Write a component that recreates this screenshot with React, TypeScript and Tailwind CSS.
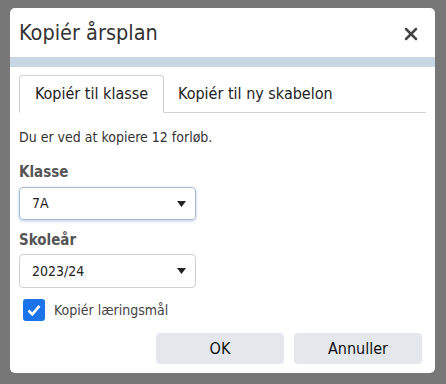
import { X } from "lucide-react";

function Caret() {
  return (
    <svg width="9" height="6" viewBox="0 0 9 6" className="shrink-0">
      <path d="M0 0h9L4.5 6z" fill="#222" />
    </svg>
  );
}

function SelectBox({ value, focused }: { value: string; focused?: boolean }) {
  return (
    <div
      className={
        focused
          ? "flex h-[33px] w-[177px] items-center justify-between rounded-[4px] border border-[#a9b9d4] pl-3 pr-[9px] text-[14px] text-[#222] shadow-[0_1px_3px_rgba(60,100,170,0.35)]"
          : "flex h-[34px] w-[177px] items-center justify-between rounded-[4px] border border-[#d0d0d0] pl-3 pr-[9px] text-[14px] text-[#222]"
      }
    >
      <span>{value}</span>
      <Caret />
    </div>
  );
}

export default function App() {
  return (
    <div
      className="h-[384px] w-[446px] bg-[#777777] pl-[10px] pt-[8px]"
      style={{ fontFamily: '"DejaVu Sans Condensed", "DejaVu Sans", sans-serif' }}
    >
      <div className="flex h-[365px] w-[425px] flex-col rounded-[5px] bg-white">
        <div className="flex h-[49px] items-center justify-between pl-[9px] pr-[14px] pt-[2px]">
          <h1 className="text-[21.5px] text-[#333]">Kopiér årsplan</h1>
          <X size={20} strokeWidth={3} className="text-[#444]" />
        </div>
        <div className="h-[10px] bg-[#c9d7e4]" />

        <div className="px-[9px] pt-[8px]">
          <div className="flex border-b border-[#d0d0d0]">
            <div className="-mb-px flex h-[38px] w-[145px] items-center justify-center rounded-t-[4px] border border-b-white border-[#d0d0d0] text-[16px] text-[#222]">
              Kopiér til klasse
            </div>
            <div className="flex h-[37px] items-center pl-[14px] text-[16px] text-[#222]">
              Kopiér til ny skabelon
            </div>
          </div>

          <p className="mt-[14px] text-[14px] leading-[20px] text-[#333]">Du er ved at kopiere 12 forløb.</p>

          <p className="mt-[15px] text-[15px] font-bold leading-[20px] text-[#555]">Klasse</p>
          <div className="mt-[5px]">
            <SelectBox value="7A" focused />
          </div>

          <p className="mt-[10px] text-[15px] font-bold leading-[20px] text-[#555]">Skoleår</p>
          <div className="mt-[4px]">
            <SelectBox value="2023/24" />
          </div>

          <label className="mt-[11px] flex items-center gap-[9px] pl-[4px]">
            <span className="flex h-[22px] w-[22px] items-center justify-center rounded-[3px] bg-[#1a73e8]">
              <svg width="14" height="12" viewBox="0 0 14 12">
                <path d="M1.5 6.5l3.8 3.8L12.5 1.8" fill="none" stroke="white" strokeWidth="2.6" />
              </svg>
            </span>
            <span className="text-[14px] leading-[20px] text-[#444]">Kopiér læringsmål</span>
          </label>

          <div className="mt-[12px] flex justify-end gap-[10px] pr-[4px]">
            <button className="h-[31px] w-[128px] rounded-[4px] bg-[#e4e7ec] text-[16px] text-[#111]">OK</button>
            <button className="h-[31px] w-[128px] rounded-[4px] bg-[#e4e7ec] text-[16px] text-[#111]">Annuller</button>
          </div>
        </div>
      </div>
    </div>
  );
}
